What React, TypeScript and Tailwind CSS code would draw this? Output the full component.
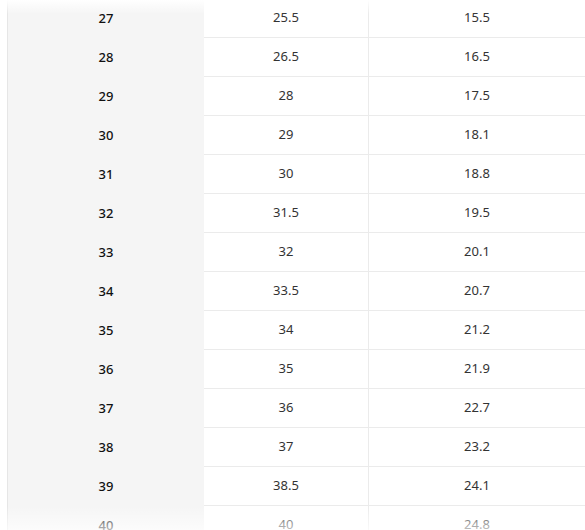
const rows = [
  ['27', '25.5', '15.5'],
  ['28', '26.5', '16.5'],
  ['29', '28', '17.5'],
  ['30', '29', '18.1'],
  ['31', '30', '18.8'],
  ['32', '31.5', '19.5'],
  ['33', '32', '20.1'],
  ['34', '33.5', '20.7'],
  ['35', '34', '21.2'],
  ['36', '35', '21.9'],
  ['37', '36', '22.7'],
  ['38', '37', '23.2'],
  ['39', '38.5', '24.1'],
  ['40', '40', '24.8'],
];

export default function App() {
  return (
    <div className="relative h-[530px] w-[585px] overflow-hidden bg-white font-['Noto_Sans',sans-serif] text-[13px]">
      <div className="ml-[7px] flex border-l border-[#e6e6e6] -mt-[1px]">
        {/* size column */}
        <div className="w-[196px] bg-[#f5f5f5]">
          {rows.map((r) => (
            <div key={r[0]} className="flex h-[39px] items-center justify-center font-medium text-[#111]">
              {r[0]}
            </div>
          ))}
        </div>

        {/* value columns */}
        <div className="flex-1">
          {rows.map((r) => (
            <div key={r[0]} className="grid h-[39px] grid-cols-[165px_1fr] border-b border-[#ebebeb] text-[#333]">
              <div className="flex items-center justify-center border-r border-[#ebebeb]">{r[1]}</div>
              <div className="flex items-center justify-center">{r[2]}</div>
            </div>
          ))}
        </div>
      </div>

      {/* fade edges */}
      <div className="pointer-events-none absolute inset-x-0 top-0 h-[14px] bg-gradient-to-b from-white to-white/0" />
      <div className="pointer-events-none absolute inset-x-0 bottom-0 h-[24px] bg-gradient-to-t from-white/70 to-white/0" />
    </div>
  );
}
